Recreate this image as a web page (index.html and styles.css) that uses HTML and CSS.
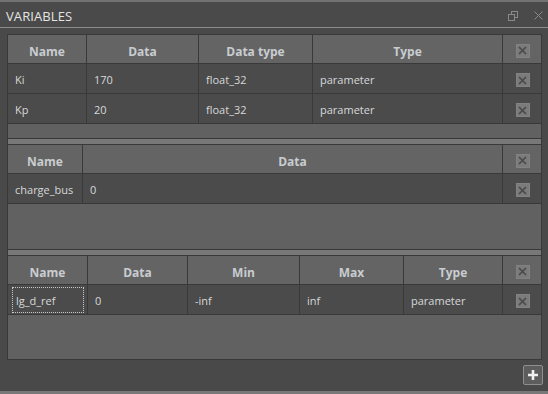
FILE: index.html
```html
<!DOCTYPE html>
<html lang="en">
<head>
    <meta charset="UTF-8">
    <meta name="viewport" content="width=device-width, initial-scale=1.0">
    <title>Variables</title>
    <link rel="stylesheet" href="styles.css">
</head>
<body>
    <div class="window">
        <div class="titlebar">
            <span class="title">VARIABLES</span>
            <div class="title-tools">
                <svg class="tool" width="10" height="10" viewBox="0 0 10 10">
                    <rect x="3.5" y="0.5" width="6" height="6" fill="none" stroke="#8a8a8a"/>
                    <rect x="0.5" y="3.5" width="6" height="6" fill="#4a4a4a" stroke="#8a8a8a"/>
                </svg>
                <svg class="tool" width="9" height="9" viewBox="0 0 9 9">
                    <path d="M0.5 0.5 L8.5 8.5 M8.5 0.5 L0.5 8.5" stroke="#8a8a8a" stroke-width="1"/>
                </svg>
            </div>
        </div>

        <div class="content">
            <div class="panes">
                <!-- parameters -->
                <section class="pane pane-first">
                    <div class="row head cols-params">
                        <div class="cell">Name</div>
                        <div class="cell">Data</div>
                        <div class="cell">Data type</div>
                        <div class="cell">Type</div>
                        <div class="cell del-cell"><span class="del"><svg width="9" height="9" viewBox="0 0 9 9"><path d="M1 1 L8 8 M8 1 L1 8" stroke="#4a4a4a" stroke-width="1.7"/></svg></span></div>
                    </div>
                    <div class="row cols-params">
                        <div class="cell">Ki</div>
                        <div class="cell">170</div>
                        <div class="cell">float_32</div>
                        <div class="cell">parameter</div>
                        <div class="cell del-cell"><span class="del"><svg width="9" height="9" viewBox="0 0 9 9"><path d="M1 1 L8 8 M8 1 L1 8" stroke="#4a4a4a" stroke-width="1.7"/></svg></span></div>
                    </div>
                    <div class="row cols-params">
                        <div class="cell">Kp</div>
                        <div class="cell">20</div>
                        <div class="cell">float_32</div>
                        <div class="cell">parameter</div>
                        <div class="cell del-cell"><span class="del"><svg width="9" height="9" viewBox="0 0 9 9"><path d="M1 1 L8 8 M8 1 L1 8" stroke="#4a4a4a" stroke-width="1.7"/></svg></span></div>
                    </div>
                </section>

                <div class="splitter"></div>

                <!-- signals -->
                <section class="pane pane-mid">
                    <div class="row head cols-signals">
                        <div class="cell">Name</div>
                        <div class="cell">Data</div>
                        <div class="cell del-cell"><span class="del"><svg width="9" height="9" viewBox="0 0 9 9"><path d="M1 1 L8 8 M8 1 L1 8" stroke="#4a4a4a" stroke-width="1.7"/></svg></span></div>
                    </div>
                    <div class="row cols-signals">
                        <div class="cell">charge_bus</div>
                        <div class="cell">0</div>
                        <div class="cell del-cell"><span class="del"><svg width="9" height="9" viewBox="0 0 9 9"><path d="M1 1 L8 8 M8 1 L1 8" stroke="#4a4a4a" stroke-width="1.7"/></svg></span></div>
                    </div>
                </section>

                <div class="splitter"></div>

                <!-- references -->
                <section class="pane pane-last">
                    <div class="row head cols-refs">
                        <div class="cell">Name</div>
                        <div class="cell">Data</div>
                        <div class="cell">Min</div>
                        <div class="cell">Max</div>
                        <div class="cell">Type</div>
                        <div class="cell del-cell"><span class="del"><svg width="9" height="9" viewBox="0 0 9 9"><path d="M1 1 L8 8 M8 1 L1 8" stroke="#4a4a4a" stroke-width="1.7"/></svg></span></div>
                    </div>
                    <div class="row cols-refs">
                        <div class="cell focused">lg_d_ref</div>
                        <div class="cell">0</div>
                        <div class="cell">-inf</div>
                        <div class="cell">inf</div>
                        <div class="cell">parameter</div>
                        <div class="cell del-cell"><span class="del"><svg width="9" height="9" viewBox="0 0 9 9"><path d="M1 1 L8 8 M8 1 L1 8" stroke="#4a4a4a" stroke-width="1.7"/></svg></span></div>
                    </div>
                </section>
            </div>

            <div class="footer">
                <button class="add">
                    <svg width="12" height="12" viewBox="0 0 12 12">
                        <path d="M6 1 V11 M1 6 H11" stroke="#f0f0f0" stroke-width="2.6"/>
                    </svg>
                </button>
            </div>
        </div>
    </div>
</body>
</html>
```

FILE: styles.css
```css
* {
    box-sizing: border-box;
}

body {
    margin: 0;
    padding: 0;
    font-family: "Open Sans", "Noto Sans", Arial, sans-serif;
    background-color: #484848;
    color: #d6d8da;
}

.window {
    width: 548px;
    height: 394px;
    display: flex;
    flex-direction: column;
    background-color: #494949;
    border-top: 2px solid #727272;
    border-bottom: 3px solid #787878;
}

.titlebar {
    height: 26px;
    display: flex;
    justify-content: space-between;
    align-items: center;
    padding: 2px 5px 0 6px;
    background-color: #4a4a4a;
    border-bottom: 1px solid #8c8c8c;
}

.title {
    font-size: 13px;
    color: #e4e4e4;
    letter-spacing: 0.1px;
}

.title-tools {
    display: flex;
    align-items: center;
    gap: 16px;
}

.tool {
    display: block;
}

.content {
    flex: 1;
    display: flex;
    flex-direction: column;
    padding: 6px 6px 0 7px;
}

.panes {
    display: flex;
    flex-direction: column;
    border: 1px solid #393939;
}

.pane {
    background-color: #616161;
}

.pane-first {
    height: 104px;
    border-bottom: 1px solid #393939;
}

.pane-mid {
    height: 106px;
    border-top: 1px solid #393939;
    border-bottom: 1px solid #393939;
}

.pane-last {
    height: 104px;
    border-top: 1px solid #393939;
}

.splitter {
    height: 5px;
    background-color: #787878;
}

.row {
    display: grid;
    height: 30px;
    background-color: #4b4b4b;
    border-bottom: 1px solid #393939;
}

.row.head {
    height: 29px;
    background-color: #646464;
}

.cols-params {
    grid-template-columns: 79px 112px 114px 190px 38px;
}

.cols-signals {
    grid-template-columns: 75px 420px 38px;
}

.cols-refs {
    grid-template-columns: 80px 100px 112px 104px 99px 38px;
}

.cell {
    display: flex;
    align-items: center;
    padding: 2px 0 0 7px;
    font-size: 11px;
    white-space: nowrap;
    border-right: 1px solid #393939;
}

.cell:last-child {
    border-right: none;
}

.head .cell {
    justify-content: center;
    padding: 5px 0 0 0;
    font-size: 12px;
    font-weight: bold;
    color: #c9ccd0;
}

.cell.del-cell {
    justify-content: center;
    padding: 3px 0 0 1px;
}

.del {
    width: 14px;
    height: 14px;
    display: flex;
    align-items: center;
    justify-content: center;
    background-color: #7b7b7b;
    border: 1px solid #828282;
}

.del svg {
    display: block;
}

.focused {
    position: relative;
    padding-left: 8px;
}

.focused::after {
    content: "";
    position: absolute;
    top: 2px;
    bottom: 1px;
    left: 4px;
    right: 3px;
    border: 1px dotted #c8c8c8;
}

.footer {
    flex: 1;
    display: flex;
    justify-content: flex-end;
    align-items: flex-start;
    padding: 5px 0 0 0;
    margin-right: -1px;
}

.add {
    width: 20px;
    height: 20px;
    padding: 0;
    display: flex;
    align-items: center;
    justify-content: center;
    background-color: #5d5d5d;
    border: 1px solid #8e8e8e;
    border-radius: 2px;
    cursor: pointer;
}

.add svg {
    display: block;
}
```
